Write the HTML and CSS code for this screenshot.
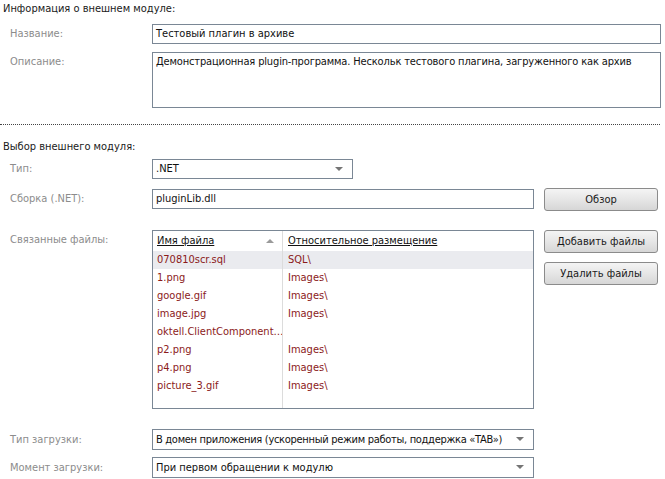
FILE: index.html
```html
<!DOCTYPE html>
<html lang="ru">
<head>
<meta charset="utf-8">
<title>Внешний модуль</title>
<link rel="stylesheet" href="styles.css">
</head>
<body>
<section class="sec">
  <h2 class="title">Информация о внешнем модуле:</h2>
  <div class="row r-name">
    <label class="lbl">Название:</label>
    <div class="box wide">Тестовый плагин в архиве</div>
  </div>
  <div class="row r-desc">
    <label class="lbl">Описание:</label>
    <div class="box wide tall">Демонстрационная plugin-программа. Нескольк тестового плагина, загруженного как архив</div>
  </div>
</section>
<hr class="sep">
<section class="sec">
  <h2 class="title t2">Выбор внешнего модуля:</h2>
  <div class="row r-type">
    <label class="lbl">Тип:</label>
    <div class="box select short">.NET<span class="arrow"></span></div>
  </div>
  <div class="row r-asm">
    <label class="lbl">Сборка (.NET):</label>
    <div class="box mid">pluginLib.dll</div>
    <button class="btn">Обзор</button>
  </div>
  <div class="row r-files">
    <label class="lbl">Связанные файлы:</label>
    <div class="list">
      <div class="cell head c1"><span class="u">Имя файла</span><span class="sort"></span></div>
      <div class="cell head c2"><span class="u">Относительное размещение</span></div>
      <div class="cell c1 sel">070810scr.sql</div><div class="cell c2 sel">SQL\</div>
      <div class="cell c1">1.png</div><div class="cell c2">Images\</div>
      <div class="cell c1">google.gif</div><div class="cell c2">Images\</div>
      <div class="cell c1">image.jpg</div><div class="cell c2">Images\</div>
      <div class="cell c1">oktell.ClientComponent…</div><div class="cell c2"></div>
      <div class="cell c1">p2.png</div><div class="cell c2">Images\</div>
      <div class="cell c1">p4.png</div><div class="cell c2">Images\</div>
      <div class="cell c1">picture_3.gif</div><div class="cell c2">Images\</div>
      <div class="cell c1 fill"></div><div class="cell c2 fill"></div>
    </div>
    <div class="btns">
      <button class="btn">Добавить файлы</button>
      <button class="btn">Удалить файлы</button>
    </div>
  </div>
  <div class="row r-load">
    <label class="lbl">Тип загрузки:</label>
    <div class="box select mid tight">В домен приложения (ускоренный режим работы, поддержка «TAB»)<span class="arrow"></span></div>
  </div>
  <div class="row r-moment">
    <label class="lbl">Момент загрузки:</label>
    <div class="box select mid">При первом обращении к модулю<span class="arrow"></span></div>
  </div>
</section>
</body>
</html>
```
FILE: styles.css
```css
* { box-sizing: border-box; }
html, body { margin: 0; padding: 0; background: #fff; }
body {
  width: 665px;
  height: 479px;
  overflow: hidden;
  font-family: "DejaVu Sans Condensed", "DejaVu Sans", sans-serif;
  font-size: 11px;
  color: #1a1a1a;
}
.title {
  margin: 0;
  padding: 1px 3px 0;
  height: 16px;
  line-height: 15px;
  font-size: 11px;
  font-weight: normal;
  color: #1a1a1a;
}
.t2 { margin-top: 13px; }
.sep {
  margin: 16px 5px 0 0;
  border: 0;
  border-top: 1px dotted #444;
  height: 0;
}
.row {
  display: flex;
  align-items: flex-start;
  padding-left: 10px;
}
.lbl {
  width: 142px;
  flex: none;
  color: #8c8c8c;
  line-height: 20px;
}
.box {
  position: relative;
  border: 1px solid #7a8795;
  background: #fff;
  height: 20px;
  line-height: 18px;
  padding: 0 3px;
  white-space: nowrap;
  overflow: hidden;
  color: #111;
}
.wide { width: 509px; }
.tall { height: 56px; white-space: normal; letter-spacing: -0.15px; }
.short { width: 201px; }
.mid { width: 382px; }
.select { padding-right: 24px; }
.tight { letter-spacing: -0.3px; }
.arrow {
  position: absolute;
  right: 9px;
  top: 7px;
  width: 0;
  height: 0;
  border-left: 4px solid transparent;
  border-right: 4px solid transparent;
  border-top: 4px solid #757575;
}
.r-name { margin-top: 8px; }
.r-desc { margin-top: 8px; }
.r-type { margin-top: 5px; }
.r-asm { margin-top: 9px; }
.r-asm .lbl { margin-top: 1px; }
.r-asm .box { margin-top: 1px; }
.btn {
  width: 114px;
  height: 23px;
  margin: 0 0 0 10px;
  padding: 0;
  border: 1px solid #8b8b8b;
  border-radius: 3px;
  background: linear-gradient(#f4f4f4, #e6e6e6 50%, #d6d6d6);
  font-family: "DejaVu Sans Condensed", "DejaVu Sans", sans-serif;
  font-size: 11px;
  color: #1a1a1a;
}
.r-files { margin-top: 19px; }
.list {
  width: 382px;
  height: 179px;
  border: 1px solid #7a8795;
  display: grid;
  grid-template-columns: 130px 1fr;
  grid-template-rows: 20px repeat(8, 18px) 1fr;
}
.cell {
  padding-left: 4px;
  line-height: 18px;
  color: #8b1a1a;
  white-space: nowrap;
  overflow: hidden;
}
.c1 { border-right: 1px solid #dcdcdc; }
.c2 { padding-left: 5px; }
.head {
  color: #111;
  line-height: 20px;
  display: flex;
  align-items: center;
}
.u { text-decoration: underline; }
.head.c1 { justify-content: space-between; padding-right: 8px; }
.sort {
  width: 0;
  height: 0;
  border-left: 4px solid transparent;
  border-right: 4px solid transparent;
  border-bottom: 4px solid #9a9a9a;
}
.sel { background: #eaebef; }
.btns {
  display: flex;
  flex-direction: column;
  gap: 9px;
}
.r-load { margin-top: 20px; }
.r-load .box, .r-moment .box { height: 21px; line-height: 19px; }
.r-load .lbl, .r-moment .lbl { line-height: 21px; }
.r-moment { margin-top: 7px; }
```
